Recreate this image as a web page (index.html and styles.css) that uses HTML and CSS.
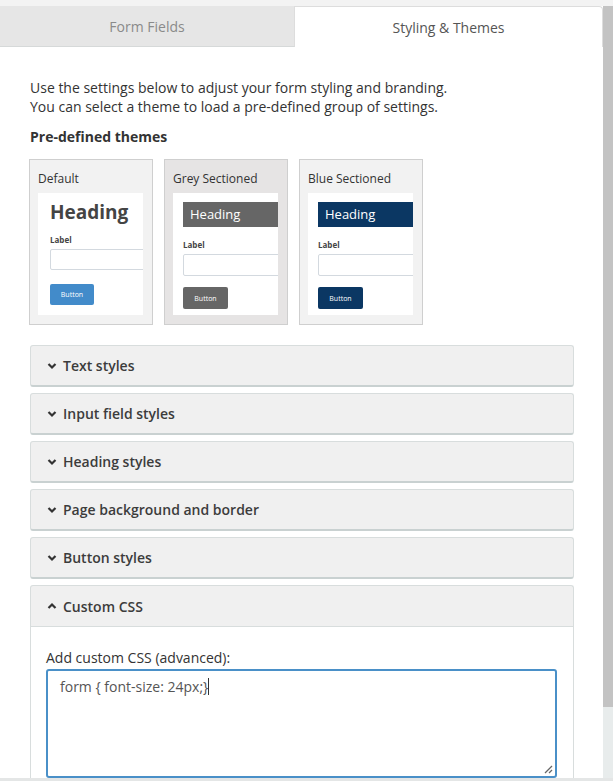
FILE: index.html
```html
<!DOCTYPE html>
<html>
<head>
<meta charset="utf-8">
<link rel="stylesheet" href="styles.css">
</head>
<body>
<div class="page">
  <div class="top-strip"></div>
  <div class="middle">
    <div class="main">
      <div class="tabs">
        <div class="tab tab-inactive">Form Fields</div>
        <div class="tab tab-active">Styling &amp; Themes</div>
      </div>
      <div class="content">
        <p class="intro">Use the settings below to adjust your form styling and branding.<br>You can select a theme to load a pre-defined group of settings.</p>
        <h3 class="section-title">Pre-defined themes</h3>
        <div class="themes">
          <div class="theme theme-default">
            <div class="theme-name">Default</div>
            <div class="preview">
              <div class="pv-heading-plain">Heading</div>
              <div class="pv-label pv-label-default">Label</div>
              <div class="pv-input"></div>
              <div class="pv-button btn-blue-light">Button</div>
            </div>
          </div>
          <div class="theme theme-grey">
            <div class="theme-name">Grey Sectioned</div>
            <div class="preview">
              <div class="pv-heading-bar bar-grey">Heading</div>
              <div class="pv-label">Label</div>
              <div class="pv-input pv-input-sec"></div>
              <div class="pv-button pv-button-sec btn-grey">Button</div>
            </div>
          </div>
          <div class="theme theme-blue">
            <div class="theme-name">Blue Sectioned</div>
            <div class="preview">
              <div class="pv-heading-bar bar-blue">Heading</div>
              <div class="pv-label">Label</div>
              <div class="pv-input pv-input-sec"></div>
              <div class="pv-button pv-button-sec btn-navy">Button</div>
            </div>
          </div>
        </div>
        <div class="accordions">
          <div class="acc"><div class="acc-head"><svg class="chev" viewBox="0 0 10 8" width="10" height="8"><polyline points="1.5,2 5,5.5 8.5,2" /></svg>Text styles</div></div>
          <div class="acc"><div class="acc-head"><svg class="chev" viewBox="0 0 10 8" width="10" height="8"><polyline points="1.5,2 5,5.5 8.5,2" /></svg>Input field styles</div></div>
          <div class="acc"><div class="acc-head"><svg class="chev" viewBox="0 0 10 8" width="10" height="8"><polyline points="1.5,2 5,5.5 8.5,2" /></svg>Heading styles</div></div>
          <div class="acc"><div class="acc-head"><svg class="chev" viewBox="0 0 10 8" width="10" height="8"><polyline points="1.5,2 5,5.5 8.5,2" /></svg>Page background and border</div></div>
          <div class="acc"><div class="acc-head"><svg class="chev" viewBox="0 0 10 8" width="10" height="8"><polyline points="1.5,2 5,5.5 8.5,2" /></svg>Button styles</div></div>
          <div class="acc acc-open">
            <div class="acc-head"><svg class="chev" viewBox="0 0 10 8" width="10" height="8"><polyline points="1.5,6 5,2.5 8.5,6" /></svg>Custom CSS</div>
            <div class="acc-body">
              <div class="field-label">Add custom CSS (advanced):</div>
              <div class="textarea"><span class="code">form { font-size: 24px;}</span><span class="caret"></span>
                <svg class="grip" viewBox="0 0 10 10" width="10" height="10"><line x1="2" y1="9" x2="9" y2="2"/><line x1="6" y1="9" x2="9" y2="6"/></svg>
              </div>
            </div>
          </div>
        </div>
      </div>
    </div>
    <div class="scrollbar"><div class="thumb"></div><div class="track"></div></div>
  </div>
  <div class="bottom-strip"></div>
</div>
</body>
</html>
```
FILE: styles.css
```css
html, body { margin: 0; padding: 0; }
body {
  font-family: "Open Sans", "Noto Sans", "Liberation Sans", sans-serif;
  color: #333;
  background: #fff;
}
.page {
  width: 613px;
  height: 781px;
  display: flex;
  flex-direction: column;
  overflow: hidden;
}
.top-strip { height: 6px; background: #f3f3f3; flex: none; }
.bottom-strip { height: 3px; background: #e4e6e6; flex: none; }
.middle { flex: 1; display: flex; min-height: 0; }
.main { width: 603px; flex: none; overflow: hidden; background: #fff; }
.scrollbar { width: 10px; display: flex; flex-direction: column; flex: none; }
.thumb { height: 701px; background: #c3c3c3; }
.track { flex: 1; background: #e8ecec; }

.tabs { display: flex; height: 41px; }
.tab {
  display: flex; align-items: center; justify-content: center;
  font-size: 14px;
}
.tab-inactive {
  width: 295px; background: #e6e6e6; color: #8a8a8a;
  border-bottom: 1px solid #d6d9d9; box-sizing: border-box;
  border-right: 1px solid #ddd;
}
.tab-active {
  flex: 1; background: #fff; color: #555;
  border: 1px solid #ddd; border-bottom: none;
  border-top-right-radius: 4px; border-left: none;
}

.content { padding: 31px 0 0 30px; }
.intro { margin: 0; font-size: 14px; line-height: 19px; color: #333; }
.section-title { margin: 11px 0 0; font-size: 14px; font-weight: 700; line-height: 19px; color: #333; }

.themes { display: flex; gap: 11px; margin: 13px 0 0 -1px; }
.theme {
  width: 124px; height: 166px; box-sizing: border-box;
  border: 1px solid #cfcfcf; padding: 0 8px 8px 8px;
  background: #f2f2f2; overflow: hidden;
}
.theme-grey { background: #e6e4e4; }
.theme-name { font-size: 12px; line-height: 16px; padding-top: 11px; height: 22px; color: #333; }
.preview { background: #fff; width: 105px; height: 122px; overflow: hidden; padding-left: 10px; box-sizing: border-box; }
.theme-default .preview { padding-left: 12px; }
.pv-heading-plain { font-size: 19px; font-weight: 700; color: #444; line-height: 24px; padding-top: 7px; }
.pv-heading-bar {
  margin-top: 9px; height: 25px; line-height: 25px; font-size: 13px; color: #fff;
  padding-left: 7px; margin-right: 0;
}
.bar-grey { background: #666; }
.bar-blue { background: #0b3763; }
.pv-label { font-size: 8px; font-weight: 700; color: #444; margin-top: 13px; line-height: 10px; }
.pv-label-default { margin-top: 11px; }
.pv-input { margin-top: 4px; height: 21px; width: 110px; border: 1px solid #d3d9df; border-radius: 2px; box-sizing: border-box; }
.pv-input-sec { height: 22px; }
.pv-button {
  margin-top: 14px; width: 44px; height: 21px; border-radius: 2px; color: #fff;
  font-size: 7px; display: flex; align-items: center; justify-content: center;
}
.pv-button-sec { margin-top: 11px; width: 45px; height: 22px; }
.btn-blue-light { background: #428bca; }
.btn-grey { background: #666; }
.btn-navy { background: #0b3763; }

.accordions { margin-top: 20px; width: 544px; display: flex; flex-direction: column; gap: 6px; }
.acc {
  border: 1px solid #d8dddd; border-bottom: 2px solid #c9d1d1; border-radius: 3px;
  background: #f0f0f0;
}
.acc-head {
  height: 39px; display: flex; align-items: center; padding-left: 16px;
  font-size: 14px; font-weight: 600; color: #3c3c3c;
}
.chev { margin-right: 6px; fill: none; stroke: #333; stroke-width: 2.2; }
.acc-open { border-bottom: none; border-radius: 3px 3px 0 0; }
.acc-open .acc-head { border-bottom: 1px solid #d8dddd; height: 40px; }
.acc-body { background: #fff; padding: 21px 16px 0 15px; height: 200px; }
.field-label { font-size: 14px; line-height: 20px; color: #333; }
.textarea {
  margin-top: 1px; height: 109px; border: 2px solid #4a90c8; border-radius: 3px;
  box-sizing: border-box; padding: 6px 12px; font-size: 14px; color: #555; line-height: 20px;
  position: relative;
}
.caret { display: inline-block; width: 1px; height: 17px; background: #333; vertical-align: -3px; }
.grip { position: absolute; right: 2px; bottom: 2px; stroke: #666; stroke-width: 1.2; }
```
